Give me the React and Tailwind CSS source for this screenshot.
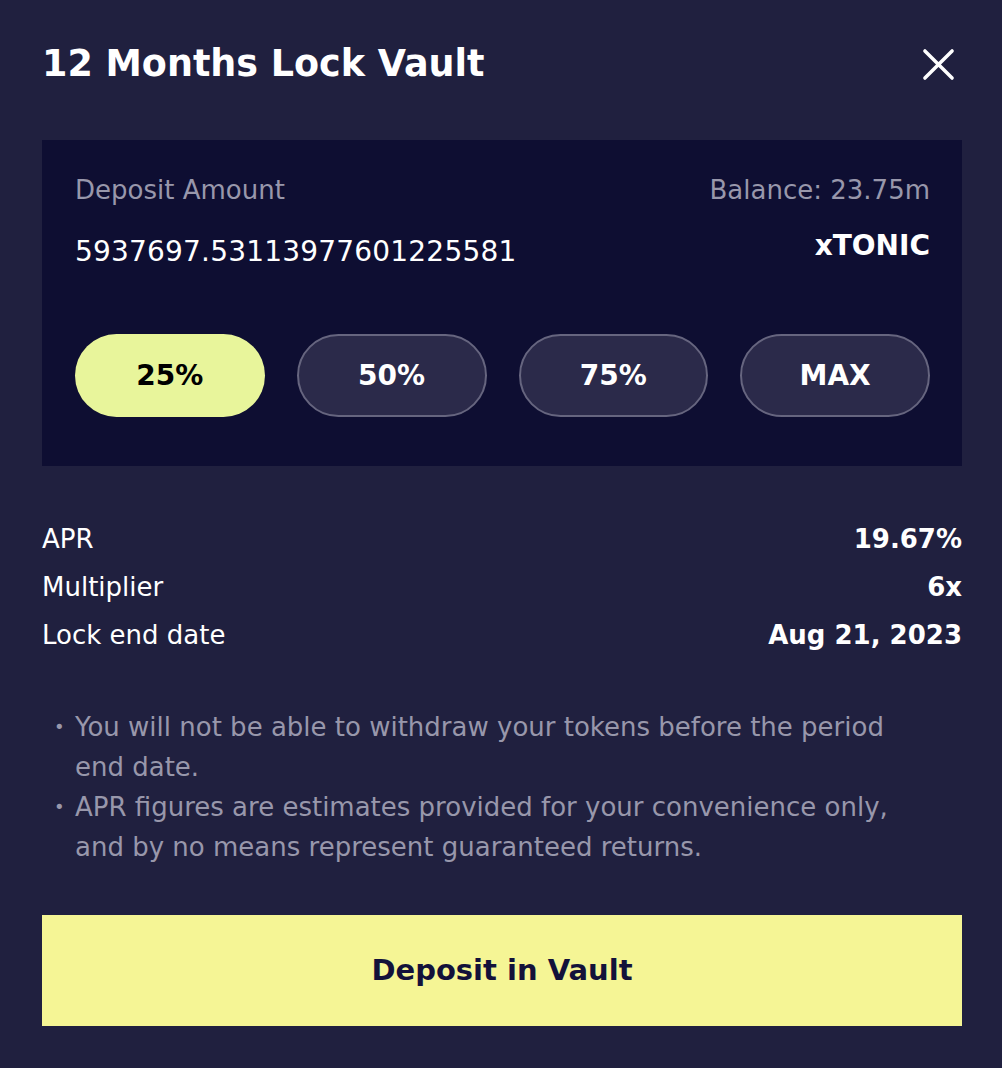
import React, { useState } from 'react';

const percents = ['25%', '50%', '75%', 'MAX'];

const details = [
  { label: 'APR', value: '19.67%' },
  { label: 'Multiplier', value: '6x' },
  { label: 'Lock end date', value: 'Aug 21, 2023' },
];

const notes = [
  'You will not be able to withdraw your tokens before the period end date.',
  'APR figures are estimates provided for your convenience only, and by no means represent guaranteed returns.',
];

const App = () => {
  const [selected, setSelected] = useState('25%');

  return (
    <div
      className="w-[1002px] h-[1068px] bg-[#20203f] pl-[42px] pr-[40px] pt-[40px] text-white"
      style={{ fontFamily: '"DejaVu Sans", Inter, sans-serif' }}
    >
      {/* Header */}
      <div className="flex items-center justify-between h-[48px]">
        <h2 className="text-[36.5px] font-bold">12 Months Lock Vault</h2>
        <button type="button" className="mr-[7px] text-white">
          <svg width="33" height="33" viewBox="0 0 34 34" fill="none" stroke="currentColor" strokeWidth="3.6" strokeLinecap="round">
            <path d="M3 3L31 31M31 3L3 31" />
          </svg>
        </button>
      </div>

      {/* Deposit panel */}
      <div className="mt-[52px] bg-[#0e0e32] pl-[33px] pr-[32px] pt-[32px] pb-[49px]">
        <div className="flex justify-between text-[26px] text-[#9897ab] leading-[36px]">
          <span>Deposit Amount</span>
          <span>Balance: 23.75m</span>
        </div>
        <div className="flex justify-between items-center mt-[24px]">
          <span className="text-[28px] leading-[40px] text-white tracking-[0.2px]">5937697.53113977601225581</span>
          <span className="text-[28px] font-bold leading-[40px] -mt-[12px]">xTONIC</span>
        </div>
        <div className="grid grid-cols-4 gap-[32px] mt-[62px]">
          {percents.map((p) => (
            <button
              key={p}
              type="button"
              onClick={() => setSelected(p)}
              className={`h-[83px] rounded-full text-[28px] font-bold ${
                selected === p
                  ? 'bg-[#e8f59b] text-black'
                  : 'bg-[#2b2a4a] border-2 border-[#66657f] text-white'
              }`}
            >
              {p}
            </button>
          ))}
        </div>
      </div>

      {/* Details */}
      <div className="mt-[53px] flex flex-col gap-[8px]">
        {details.map((d) => (
          <div key={d.label} className="flex justify-between text-[26px] leading-[40px]">
            <span>{d.label}</span>
            <span className="font-bold">{d.value}</span>
          </div>
        ))}
      </div>

      {/* Notes */}
      <ul className="mt-[52px] text-[26px] leading-[40px] text-[#9897ab]">
        {notes.map((n) => (
          <li key={n} className="flex">
            <span className="w-[33px] shrink-0 pl-[12px] text-[18px]">•</span>
            <span className="max-w-[825px]">{n}</span>
          </li>
        ))}
      </ul>

      {/* Action */}
      <button
        type="button"
        className="mt-[48px] w-full h-[111px] bg-[#f5f595] text-[#13123a] text-[29px] font-semibold"
      >
        Deposit in Vault
      </button>
    </div>
  );
};

export default App;
